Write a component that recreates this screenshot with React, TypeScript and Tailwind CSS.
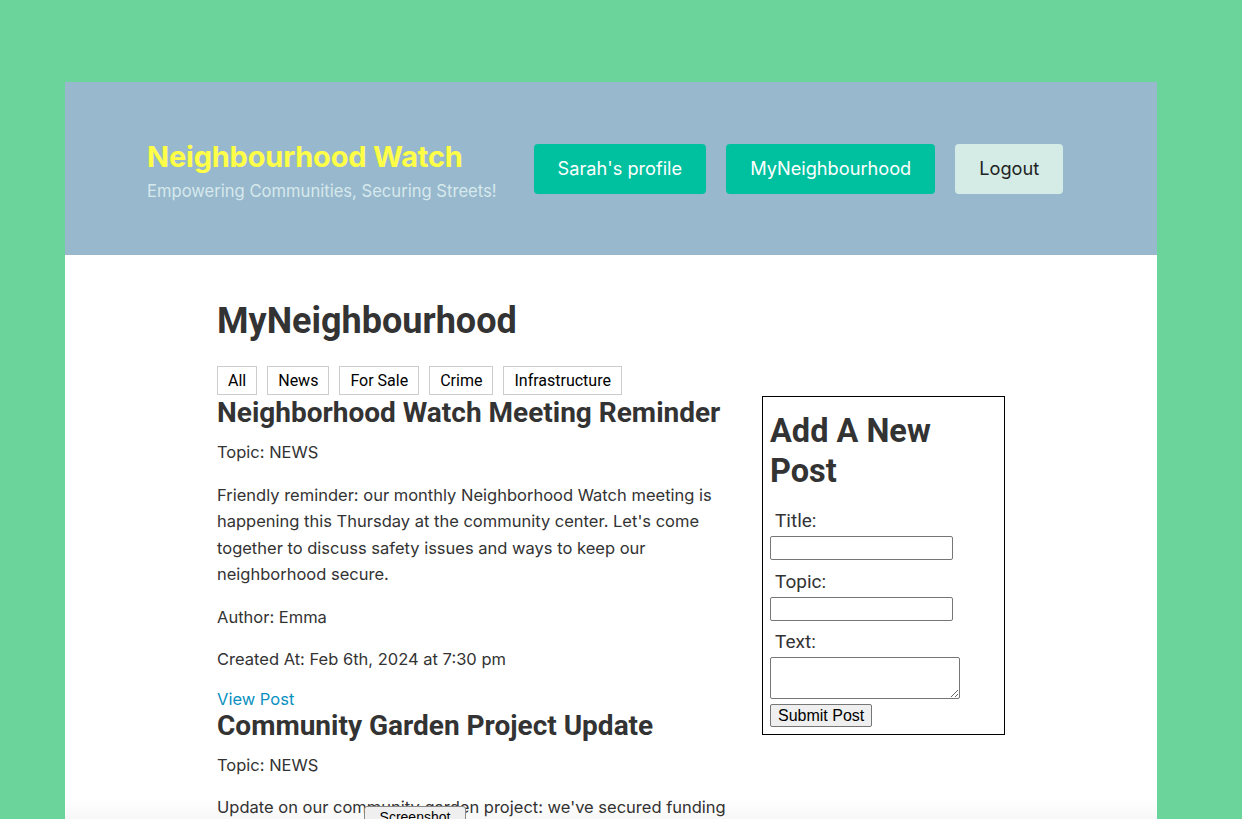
import React from 'react';

const topics = ["All", "News", "For Sale", "Crime", "Infrastructure"];

interface Post {
  title: string,
  topic: string,
  text: string,
  author: string,
  createdAt: string
};

const posts: Post[] = [
  {
    title: "Neighborhood Watch Meeting Reminder",
    topic: "NEWS",
    text: "Friendly reminder: our monthly Neighborhood Watch meeting is happening this Thursday at the community center. Let's come together to discuss safety issues and ways to keep our neighborhood secure.",
    author: "Emma",
    createdAt: "Feb 6th, 2024 at 7:30 pm"
  },
  {
    title: "Community Garden Project Update",
    topic: "NEWS",
    text: "Update on our community garden project: we've secured funding for new raised beds and a shared tool shed. Volunteers are welcome to join us this weekend to help with planting.",
    author: "Liam",
    createdAt: "Feb 4th, 2024 at 10:15 am"
  }
];

const PostItem: React.FC<{ post: Post }> = ({ post }) => {
  return (
    <div>
      <h2 className="font-['Roboto',sans-serif] font-bold text-[28px] leading-[34px] text-[#333]">{post.title}</h2>
      <p className="mt-[9px] leading-[26.5px]">Topic: {post.topic}</p>
      <p className="mt-4 leading-[26.5px]">{post.text}</p>
      <p className="mt-4 leading-[26.5px]">Author: {post.author}</p>
      <p className="mt-4 leading-[26.5px]">Created At: {post.createdAt}</p>
      <a href="#" className="block mt-4 leading-[20px] text-[#0a90bf]">View Post</a>
    </div>
  );
};

export default function App() {
  return (
    <div className="min-h-screen bg-[#6ad49b] pt-[82px] pl-[65px] font-['Inter',sans-serif]">
      <div className="w-[1092px] bg-white min-h-[900px]">
        {/* header */}
        <header className="h-[173px] bg-[#98b8cd] flex items-center pl-[82px]">
          <div className="pt-[4px]">
            <h1 className="font-bold text-[29px] leading-[34px] text-[#ffff48] tracking-[-0.2px]">Neighbourhood Watch</h1>
            <p className="mt-[7px] text-[16.6px] leading-[20px] text-[#d6e9ec]">Empowering Communities, Securing Streets!</p>
          </div>
          <nav className="ml-[37px] flex gap-5">
            <button className="h-[50px] px-6 rounded bg-[#00c19f] text-white text-[18.2px]">Sarah's profile</button>
            <button className="h-[50px] px-6 rounded bg-[#00c19f] text-white text-[18.2px]">MyNeighbourhood</button>
            <button className="h-[50px] px-6 rounded bg-[#d4ebe6] text-[#222] text-[18.2px]">Logout</button>
          </nav>
        </header>

        {/* main */}
        <main className="pl-[152px] pt-[45px] text-[16.5px] text-[#333]">
          <h1 className="font-['Roboto',sans-serif] font-bold text-[36px] leading-[43px] text-[#333]">MyNeighbourhood</h1>
          <div className="mt-[23px] flex gap-[10px] font-['Roboto',sans-serif]">
            {topics.map((t) => (
              <button key={t} className="h-[29px] px-[10px] border border-[#ccc] bg-white text-black text-[16px]">{t}</button>
            ))}
          </div>
          <div className="flex gap-[25px] items-start">
            <div className="w-[520px] mt-[1px]">
              {posts.map((p) => (
                <PostItem key={p.title} post={p} />
              ))}
            </div>
            <aside className="mt-[1px] w-[243px] border border-black pl-[7px] pr-2 pt-[14px] pb-[7px]">
              <h2 className="w-[200px] font-['Roboto',sans-serif] font-bold text-[32.5px] leading-[40px] text-[#333]">Add A New Post</h2>
              <form className="mt-[19px] flex flex-col items-start font-['Roboto',sans-serif]">
                <label className="pl-[5px] text-[19px] leading-[22px] text-[#333]">Title:</label>
                <input type="text" className="mt-[4px] w-[183px] h-[24px] border border-[#767676] rounded-[2px]" />
                <label className="mt-[11px] pl-[5px] text-[19px] leading-[22px] text-[#333]">Topic:</label>
                <input type="text" className="mt-[4px] w-[183px] h-[24px] border border-[#767676] rounded-[2px]" />
                <label className="mt-[10px] pl-[5px] text-[19px] leading-[22px] text-[#333]">Text:</label>
                <textarea className="mt-[4px] w-[190px] h-[42px] border border-[#767676] rounded-[2px] resize-y" />
                <button type="button" className="mt-[5px] h-[23px] px-[7px] bg-[#efefef] border border-[#767676] rounded-[2px] text-[16px] leading-[18px] text-black font-['Liberation_Sans',sans-serif]">Submit Post</button>
              </form>
            </aside>
          </div>
        </main>
      </div>

      {/* bottom fade overlay */}
      <div className="fixed bottom-0 left-[65px] w-[1092px] h-[20px] bg-gradient-to-b from-transparent to-black/[0.03] pointer-events-none"></div>
      <div className="fixed bottom-[-10px] left-[364px] w-[102px] h-[23px] bg-[#efefef] border border-[#888] rounded-[3px] text-center text-[14px] leading-[20px] text-black font-['Liberation_Sans',sans-serif]">Screenshot</div>
    </div>
  );
}
